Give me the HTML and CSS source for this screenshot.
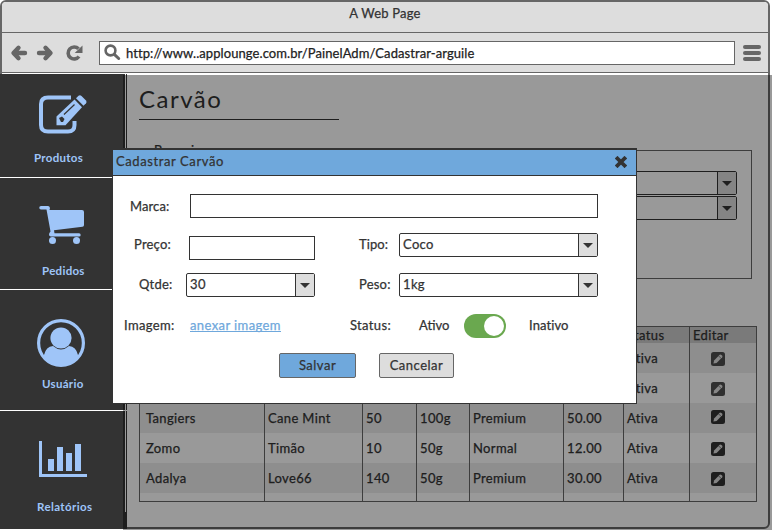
FILE: index.html
```
<!DOCTYPE html>
<html lang="pt-BR">
<head>
<meta charset="utf-8">
<title>A Web Page</title>
<link rel="stylesheet" href="styles.css">
</head>
<body>
<svg class="defs" width="0" height="0">
  <symbol id="pen" viewBox="0 0 14 14"><rect width="14" height="14" rx="2.5" fill="#333"/><path d="M2.400 11.600l.7-3.200 5.600-5.600q.9-.6 1.700.1l.7.7q.7.8.1 1.700l-5.600 5.600z" fill="#ddd"/><path d="M7.600 3.900l2.500 2.500" stroke="#444" stroke-width=".7"/></symbol>
</svg>
<div class="window">
  <header class="titlebar">A Web Page</header>
  <div class="toolbar">
    <svg class="nav" width="74" height="20" viewBox="0 0 74 20">
      <g fill="none" stroke="#666" stroke-width="4.400" stroke-linejoin="round" stroke-linecap="round"><path d="M8.500 4.800L3.500 10l5 5.200M4 10h11M35.500 4.800L40.500 10l-5 5.200M40 10H29"/><path stroke-linecap="butt" stroke-width="3.600" d="M68.500 5.800A6 6 0 1 0 69 13.500"/></g>
      <path d="M72.500 2.500v7.500h-7.800z" fill="#666"/>
    </svg>
    <div class="address">
      <svg width="17" height="17" viewBox="0 0 17 17" fill="none" stroke="#666"><circle cx="6.500" cy="6.500" r="4.900" stroke-width="2.600"/><path d="M10.300 10.300l4.400 4.200" stroke-width="3" stroke-linecap="round"/></svg>
      <span>http://www..applounge.com.br/PainelAdm/Cadastrar-arguile</span>
    </div>
    <div class="burger"><i></i><i></i><i></i></div>
  </div>
  <div class="page">
    <nav class="sidebar">
      <a class="item produtos">
        <svg width="50" height="40" viewBox="0 0 50 40"><path d="M32 3.500H9Q2 3.500 2 10v21q0 6.500 7 6.500h20q6.500 0 6.500-6.500v-4" fill="none" stroke="#9fc5f8" stroke-width="4"/><g fill="#9fc5f8"><path d="M17.500 22.500L35.500 5.500l7.500 7.700-16.500 18h-9z"/><path d="M37 4.200l2.500-2.500q1.500-1.200 3 .2l4.500 4.600q1.200 1.400 0 2.800l-2.500 2.500z"/></g><path d="M25 20.500l10.500-10" stroke="#333" stroke-width="1.200"/><path d="M20 24l3-1.500 2.500 2.500-1.500 3h-2z" fill="#333"/></svg>
        <span>Produtos</span>
      </a>
      <a class="item pedidos">
        <svg width="46" height="38" viewBox="0 0 46 38"><g fill="#9fc5f8"><path d="M10.500 4H43q2 0 2 2v13q0 1.500-1.500 1.700L15 24.200l.5 3H40a1.600 1.600 0 0 1 0 3.400H13q-3 0-3-2 0-1.500 1.500-3L7.500 3.500H2a1.700 1.700 0 0 1 0-3.500h7q1.500 0 2 2z"/><circle cx="13.500" cy="34.500" r="3.500"/><circle cx="37.500" cy="34.500" r="3.500"/></g></svg>
        <span>Pedidos</span>
      </a>
      <a class="item usuario">
        <svg width="48" height="48" viewBox="0 0 48 48"><clipPath id="disc"><circle cx="24" cy="24" r="23"/></clipPath><circle cx="24" cy="24" r="22.400" fill="none" stroke="#9fc5f8" stroke-width="3.200"/><g fill="#9fc5f8" clip-path="url(#disc)"><circle cx="24" cy="19" r="10.600"/><path d="M3 48l4-12q2-8.500 9-9 8 7 16 0 7 .5 9 9l4 12z"/></g></svg>
        <span>Usuário</span>
      </a>
      <a class="item relatorios">
        <svg width="48" height="36" viewBox="0 0 48 36" fill="#9fc5f8"><path d="M0 0h3v33h45v3H0zM9 18h6v12H9zM18 6h6v24h-6zM27 12h6v18h-6zM36 3h6v27h-6z"/></svg>
        <span>Relatórios</span>
      </a>
    </nav>
    <main class="content">
      <h1>Carvão</h1>
      <fieldset class="filters">
        <legend>Pesquisar:</legend>
        <div class="select"><span></span><b></b></div>
        <div class="select"><span></span><b></b></div>
      </fieldset>
      <table class="grid">
        <colgroup><col class="c1"><col class="c2"><col class="c3"><col class="c4"><col class="c5"><col class="c6"><col class="c7"><col class="c8"></colgroup>
        <tr class="head"><th></th><th></th><th></th><th></th><th></th><th></th><th>Status</th><th>Editar</th></tr>
        <tr><td></td><td></td><td></td><td></td><td></td><td></td><td>Ativa</td><td class="edit"><svg class="soft"><use href="#pen"/></svg></td></tr>
        <tr><td></td><td></td><td></td><td></td><td></td><td></td><td>Ativa</td><td class="edit"><svg class="soft"><use href="#pen"/></svg></td></tr>
        <tr><td>Tangiers</td><td>Cane Mint</td><td>50</td><td>100g</td><td>Premium</td><td>50.00</td><td>Ativa</td><td class="edit high"><svg><use href="#pen"/></svg></td></tr>
        <tr><td>Zomo</td><td>Timão</td><td>10</td><td>50g</td><td>Normal</td><td>12.00</td><td>Ativa</td><td class="edit"><svg><use href="#pen"/></svg></td></tr>
        <tr><td>Adalya</td><td>Love66</td><td>140</td><td>50g</td><td>Premium</td><td>30.00</td><td>Ativa</td><td class="edit"><svg><use href="#pen"/></svg></td></tr>
        <tr class="foot"><td></td><td></td><td></td><td></td><td></td><td></td><td></td><td></td></tr>
      </table>
    </main>
  </div>
</div>
<div class="overlay"></div>
<section class="modal">
  <header><span>Cadastrar Carvão</span><svg width="12" height="12" viewBox="0 0 12 12"><path d="M2.500 2.500l7 7M9.500 2.500l-7 7" stroke="#333" stroke-width="3.800" stroke-linecap="square"/></svg></header>
  <div class="form">
    <div class="row marca"><label>Marca:</label><div class="input"></div></div>
    <div class="row preco"><label>Preço:</label><div class="input"></div><label class="second">Tipo:</label><div class="select wide"><span>Coco</span><b></b></div></div>
    <div class="row qtde"><label>Qtde:</label><div class="select small"><span>30</span><b></b></div><label class="second">Peso:</label><div class="select wide"><span>1kg</span><b></b></div></div>
    <div class="row imagem"><label>Imagem:</label><a class="link">anexar imagem</a><label class="second">Status:</label><span class="on">Ativo</span><div class="toggle"><i></i></div><span class="off">Inativo</span></div>
    <div class="actions"><button class="primary">Salvar</button><button>Cancelar</button></div>
  </div>
</section>
</body>
</html>
```
FILE: styles.css
```
* { box-sizing: border-box; }
body { margin: 0; width: 772px; height: 530px; overflow: hidden; position: relative; background: #fff; color: #333; font: 13px/18px Lato, "Liberation Sans", sans-serif; letter-spacing: .35px; -webkit-text-stroke: .25px currentColor; }
.defs { position: absolute; }
svg { display: block; flex: none; }
.window { width: 770px; height: 529px; border: 2px solid #666; border-radius: 6px; }
.titlebar { height: 31px; background: #ddd; border-bottom: 1px solid #666; border-radius: 4px 4px 0 0; text-align: center; padding: 2px 0 0; letter-spacing: .2px; }
.toolbar { height: 40px; background: #ddd; border-bottom: 1px solid #666; display: flex; align-items: center; }
.nav { margin-left: 8px; }
.address { margin-left: 15px; width: 636px; height: 24px; background: #fff; border: 1px solid #666; display: flex; align-items: center; gap: 5px; padding-left: 4px; color: #222; letter-spacing: .08px; }
.burger { margin-left: 8px; display: flex; flex-direction: column; gap: 2px; }
.burger i { width: 18px; height: 4px; border-radius: 2px; background: #666; }
.page { display: flex; height: 454px; margin: 1px 0 0 -2px; }
.sidebar { width: 127px; height: 455px; background: linear-gradient(#fff, #fff) 125px 0 / 1px 438px no-repeat #333; display: flex; flex-direction: column; color: #9fc5f8; font-size: 11.5px; font-weight: 700; letter-spacing: .1px; -webkit-text-stroke: 0; }
.item { display: flex; flex-direction: column; border-bottom: 1px solid #fff; }
.produtos { height: 104px; padding-top: 20px; }
.produtos svg { margin-left: 39px; }
.produtos span { margin: 15px 0 0 34px; letter-spacing: .3px; }
.pedidos { height: 112px; padding-top: 28px; }
.pedidos svg { margin-left: 39px; }
.pedidos span { margin: 18px 0 0 42px; letter-spacing: .3px; }
.usuario { height: 121px; padding-top: 29px; }
.usuario svg { margin-left: 37px; }
.usuario span { margin: 8px 0 0 42px; letter-spacing: .3px; }
.relatorios { border: 0; padding-top: 30px; }
.relatorios svg { margin-left: 39px; }
.relatorios span { margin: 21px 0 0 37px; letter-spacing: .4px; }
.content { padding: 6px 0 0 12px; width: 639px; }
h1 { margin: 0; width: 200px; height: 40px; border-bottom: 1px solid #333; font-size: 24px; line-height: 37px; font-weight: 400; letter-spacing: 1.5px; -webkit-text-stroke: 0; }
.filters { margin: 19px 0 0; width: 613px; height: 140px; border: 1px solid #666; padding: 10px 14px 0; display: flex; flex-direction: column; align-items: flex-end; gap: 1px; }
.filters legend { margin-left: -1px; padding: 0 1px; line-height: 22px; letter-spacing: .5px; }
.filters .select { width: 260px; }
.select { height: 24px; border: 1px solid #333; border-radius: 2px; display: flex; background: #fff; }
.select span { flex: 1; padding-left: 3px; line-height: 21px; }
.select b { width: 19px; background: #ddd; border-left: 1px solid #333; display: flex; align-items: center; justify-content: center; }
.select b::after { content: ""; border: 5px solid transparent; border-top: 5px solid #333; border-bottom: 0; }
.grid { table-layout: fixed; width: 618px; height: 176px; margin-top: 47px; border-collapse: separate; border-spacing: 0; border: 1px solid #666; }
.c1 { width: 125px; } .c2 { width: 98px; } .c3 { width: 54px; } .c4 { width: 53px; }
.c5 { width: 94px; } .c6 { width: 60px; } .c7 { width: 66px; } .c8 { width: 66px; }
.grid tr { height: 30px; }
.grid td, .grid th { padding: 0 0 0 3px; border-right: 1px solid #666; text-align: left; font-weight: 400; vertical-align: middle; line-height: 18px; white-space: nowrap; }
.grid td:first-child { padding-left: 6px; }
.grid td:last-child, .grid th:last-child { border-right: 0; }
.grid tr:nth-child(even) { background: #ededed; }
.grid .head { height: 16px; background: #cbcbcb; }
.grid .head th { line-height: 16px; }
.grid .foot { height: 8px; background: #fff; }
.edit svg { width: 14px; height: 14px; margin: 2px 0 0 18px; }
.edit.high svg { margin-top: -2px; }
.soft { opacity: .85; }
.overlay { position: absolute; left: 123px; top: 75px; width: 649px; height: 455px; background: rgba(0, 0, 0, .4); }
.modal { position: absolute; left: 112px; top: 148px; width: 525px; height: 256px; background: #fff; border: 1px solid #333; border-top-width: 2px; }
.modal header { height: 26px; background: #6fa8dc; border-bottom: 1px solid #333; display: flex; justify-content: space-between; align-items: center; padding: 0 9px 2px 3px; letter-spacing: .6px; }
.modal header span { margin-top: -1px; }
.row { display: flex; }
.marca { padding: 18px 0 0 17px; height: 57px; }
.marca label { width: 60px; padding-top: 3px; letter-spacing: .1px; }
.input { height: 24px; border: 1px solid #333; }
.marca .input { width: 408px; }
.preco { padding-left: 21px; height: 40px; }
.preco label { width: 55px; padding-top: 2px; letter-spacing: .2px; }
.preco .input { width: 126px; margin-top: 3px; }
.preco .second { margin-left: 44px; width: 40px; letter-spacing: .1px; }
.qtde { padding-left: 26px; height: 41px; }
.qtde label { width: 47px; padding-top: 2px; letter-spacing: .2px; }
.small { width: 129px; }
.qtde .second { margin-left: 44px; width: 40px; }
.wide { width: 199px; }
.imagem { padding-left: 11px; height: 39px; line-height: 22px; }
.imagem label { width: 66px; }
.link { color: #6fa8dc; height: 18px; line-height: 22px; border-bottom: 1px solid #6fa8dc; width: 91px; white-space: nowrap; letter-spacing: .4px; }
.imagem .second { margin-left: 69px; width: 69px; }
.on { width: 45px; letter-spacing: 0; }
.toggle { width: 42px; height: 24px; border-radius: 12px; background: #6aa84f; padding: 2px; display: flex; justify-content: flex-end; }
.toggle i { width: 20px; height: 20px; border-radius: 50%; background: #fff; }
.off { margin-left: 23px; letter-spacing: .1px; }
.actions { display: flex; gap: 23px; padding-left: 166px; }
button { width: 75px; height: 25px; padding: 0 0 1px; font: inherit; letter-spacing: .5px; color: #333; background: #ddd; border: 1px solid #666; border-radius: 2px; }
.primary { width: 77px; background: #6fa8dc; }
```
